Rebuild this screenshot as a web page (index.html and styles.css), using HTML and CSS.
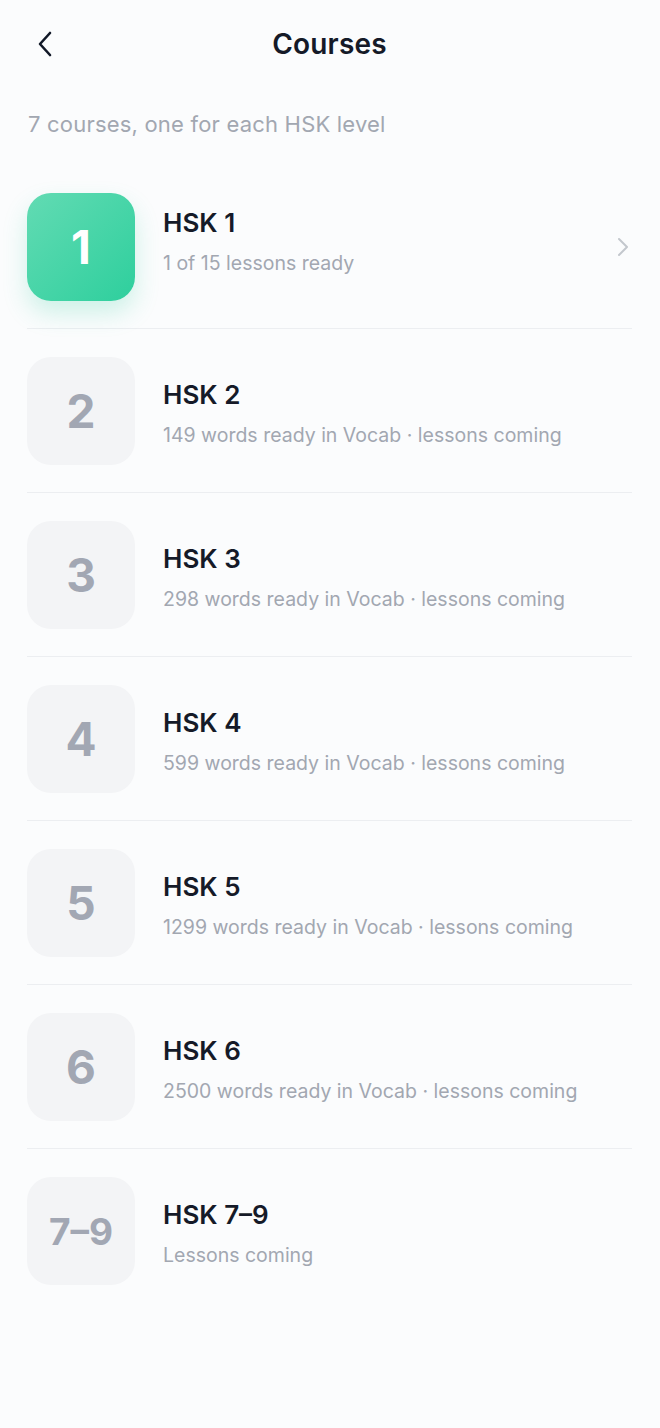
FILE: index.html
```html
<!DOCTYPE html>
<html>
<head>
<meta charset="utf-8">
<link rel="stylesheet" href="styles.css">
</head>
<body>
<div class="screen">
  <header class="topbar">
    <button class="back" aria-label="Back">
      <svg width="20" height="28" viewBox="0 0 20 28"><path d="M14 3 L4 14 L14 25" fill="none" stroke="#111827" stroke-width="2.6" stroke-linecap="round" stroke-linejoin="round"/></svg>
    </button>
    <h1 class="title">Courses</h1>
  </header>
  <p class="intro">7 courses, one for each HSK level</p>
  <ul class="list">
    <li class="row row-active">
      <div class="tile tile-active">1</div>
      <div class="info"><div class="name">HSK 1</div><div class="meta">1 of 15 lessons ready</div></div>
      <svg class="chev" width="14" height="22" viewBox="0 0 14 22"><path d="M3 3 L11 11 L3 19" fill="none" stroke="#c3c7cd" stroke-width="2" stroke-linecap="round" stroke-linejoin="round"/></svg>
    </li>
    <li class="row">
      <div class="tile">2</div>
      <div class="info"><div class="name">HSK 2</div><div class="meta">149 words ready in Vocab · lessons coming</div></div>
    </li>
    <li class="row">
      <div class="tile">3</div>
      <div class="info"><div class="name">HSK 3</div><div class="meta">298 words ready in Vocab · lessons coming</div></div>
    </li>
    <li class="row">
      <div class="tile">4</div>
      <div class="info"><div class="name">HSK 4</div><div class="meta">599 words ready in Vocab · lessons coming</div></div>
    </li>
    <li class="row">
      <div class="tile">5</div>
      <div class="info"><div class="name">HSK 5</div><div class="meta">1299 words ready in Vocab · lessons coming</div></div>
    </li>
    <li class="row">
      <div class="tile">6</div>
      <div class="info"><div class="name">HSK 6</div><div class="meta">2500 words ready in Vocab · lessons coming</div></div>
    </li>
    <li class="row last">
      <div class="tile tile-small">7–9</div>
      <div class="info"><div class="name">HSK 7–9</div><div class="meta">Lessons coming</div></div>
    </li>
  </ul>
</div>
</body>
</html>
```
FILE: styles.css
```css
* { box-sizing: border-box; }
html, body { margin: 0; padding: 0; }
body {
  background: #fbfcfd;
  font-family: Inter, "Noto Sans", sans-serif;
  color: #111827;
}
.screen { width: 660px; min-height: 1428px; padding: 0 28px 0 27px; }
.topbar {
  position: relative;
  height: 88px;
  display: flex;
  align-items: center;
  justify-content: center;
}
.back {
  position: absolute;
  left: 9px;
  top: 30px;
  background: none;
  border: 0;
  padding: 0;
  width: 20px;
  height: 28px;
}
.title {
  margin: 0;
  font-size: 28px;
  font-weight: 600;
  letter-spacing: 0.2px;
  color: #151a28;
}
.intro {
  margin: 0;
  height: 77px;
  padding-top: 23px;
  font-size: 22px;
  color: #a2a7b1;
  letter-spacing: 0.2px;
  padding-left: 1px;
}
.list { list-style: none; margin: 0; padding: 0; }
.row {
  display: flex;
  align-items: center;
  height: 164px;
  border-bottom: 1px solid #eceef1;
}
.row.last { border-bottom: 0; }
.tile {
  width: 108px;
  height: 108px;
  flex: none;
  border-radius: 24px;
  background: #f3f4f6;
  color: #a2a7b3;
  display: flex;
  align-items: center;
  justify-content: center;
  font-size: 46px;
  font-weight: 700;
}
.tile-small { font-size: 37px; }
.tile-active {
  background: linear-gradient(135deg, #62dbb3 0%, #2ecf9d 100%);
  color: #ffffff;
  box-shadow: 0 12px 24px rgba(46, 207, 157, 0.22);
}
.info {
  flex: 1;
  margin-left: 28px;
  margin-top: 4px;
  display: flex;
  flex-direction: column;
  gap: 13px;
}
.row-active .info { margin-top: -12px; }
.name {
  font-size: 26px;
  font-weight: 600;
  color: #151a28;
  letter-spacing: 0;
}
.meta {
  font-size: 19.5px;
  color: #a2a7b1;
  letter-spacing: 0;
}
.chev { flex: none; margin-right: 2px; }
```
